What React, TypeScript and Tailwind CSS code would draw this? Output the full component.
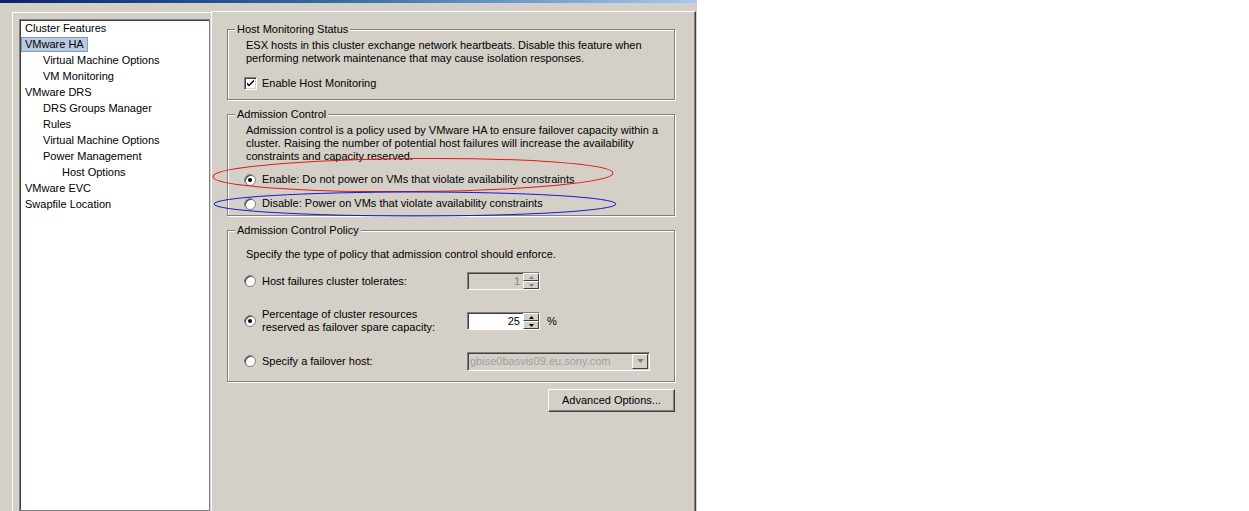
import React from "react";

const tree = [
  { label: "Cluster Features", level: 0 },
  { label: "VMware HA", level: 0, selected: true },
  { label: "Virtual Machine Options", level: 1 },
  { label: "VM Monitoring", level: 1 },
  { label: "VMware DRS", level: 0 },
  { label: "DRS Groups Manager", level: 1 },
  { label: "Rules", level: 1 },
  { label: "Virtual Machine Options", level: 1 },
  { label: "Power Management", level: 1 },
  { label: "Host Options", level: 2 },
  { label: "VMware EVC", level: 0 },
  { label: "Swapfile Location", level: 0 },
];

const indent = ["pl-0", "pl-[18px]", "pl-[37px]"];

function Radio({ checked }: { checked?: boolean }) {
  return (
    <div className="w-[12px] h-[12px] shrink-0 rounded-full bg-white border border-[#808080] shadow-[inset_1px_1px_0_#404040] flex items-center justify-center">
      {checked && <div className="w-[4px] h-[4px] rounded-full bg-black" />}
    </div>
  );
}

function Checkbox() {
  return (
    <div className="w-[13px] h-[13px] shrink-0 bg-white border border-t-[#808080] border-l-[#808080] border-b-white border-r-white shadow-[inset_1px_1px_0_#404040,inset_-1px_-1px_0_#d4d0c8] flex items-center justify-center">
      <svg width="7" height="7" viewBox="0 0 7 7">
        <path d="M0 2.5 L0 4.5 L2 6.5 L7 1.5 L7 -0.5 L2 4.5 Z" fill="#000" />
      </svg>
    </div>
  );
}

function SpinButtons({ disabled }: { disabled?: boolean }) {
  const arrow = disabled ? "#808080" : "#000";
  return (
    <div className="w-[16px] flex flex-col">
      <div className="flex-1 bg-[#d4d0c8] border border-t-white border-l-white border-b-[#404040] border-r-[#404040] flex items-center justify-center">
        <svg width="5" height="3" viewBox="0 0 5 3">
          <path d="M2.5 0 L5 3 L0 3 Z" fill={arrow} />
        </svg>
      </div>
      <div className="flex-1 bg-[#d4d0c8] border border-t-white border-l-white border-b-[#404040] border-r-[#404040] flex items-center justify-center">
        <svg width="5" height="3" viewBox="0 0 5 3">
          <path d="M0 0 L5 0 L2.5 3 Z" fill={arrow} />
        </svg>
      </div>
    </div>
  );
}

function Spinner({ value, disabled }: { value: string; disabled?: boolean }) {
  return (
    <div className="w-[73px] h-[18px] flex border border-t-[#808080] border-l-[#808080] border-b-white border-r-white">
      <div
        className={
          disabled
            ? "flex-1 bg-[#d4d0c8] text-[#808080] text-right pr-[3px] leading-[16px] shadow-[inset_1px_1px_0_#404040]"
            : "flex-1 bg-white text-black text-right pr-[3px] leading-[16px] shadow-[inset_1px_1px_0_#404040]"
        }
      >
        {value}
      </div>
      <SpinButtons disabled={disabled} />
    </div>
  );
}

function Group({ title, children, className }: { title: string; children: React.ReactNode; className?: string }) {
  return (
    <fieldset className={"border border-[#808080] shadow-[inset_1px_1px_0_#fff,1px_1px_0_#fff] px-[7px] " + (className ?? "")}>
      <legend className="px-[2px] bg-[#d4d0c8] leading-[13px]">{title}</legend>
      {children}
    </fieldset>
  );
}

export default function App() {
  return (
    <div className="w-[1249px] h-[511px] bg-white flex font-['Liberation_Sans',Arial,sans-serif] text-[11px] leading-[13px] text-black overflow-hidden">
      <div className="relative w-[697px] h-full bg-[#d4d0c8] flex flex-col">
        <div className="h-[3px] bg-gradient-to-r from-[#0a246a] via-[#3a6ea5] to-[#a6caf0]" />
        <div className="flex-1 flex pt-[8px] min-h-0">
          {/* tree */}
          <div className="ml-[12px] mt-[1px] w-[199px] border-t border-l border-white pt-[6px] pl-[6px]">
            <div className="w-[191px] h-full bg-white border border-[#808080] shadow-[inset_1px_1px_0_#404040] pl-[1px]">
              {tree.map((t, i) => (
                <div key={i} className={"h-[16px] flex items-center " + indent[t.level]}>
                  {t.selected ? (
                    <span className="px-[3px] leading-[13px] bg-[#b9cbe3] border border-[#7f9db9]">{t.label}</span>
                  ) : (
                    <span className="px-[4px]">{t.label}</span>
                  )}
                </div>
              ))}
            </div>
          </div>

          {/* settings */}
          <div className="w-[485px] h-full border-t border-l border-white border-r border-r-[#404040] shadow-[inset_-1px_0_0_#808080] pl-[15px] pt-[11px]">
            <div className="w-[448px] flex flex-col">
              <Group title="Host Monitoring Status" className="pb-[9px]">
                <div className="pl-[11px] pt-[3px]">
                  <p>ESX hosts in this cluster exchange network heartbeats. Disable this feature when</p>
                  <p>performing network maintenance that may cause isolation responses.</p>
                </div>
                <div className="flex items-center gap-[5px] pl-[9px] mt-[12px]">
                  <Checkbox />
                  <span>Enable Host Monitoring</span>
                </div>
              </Group>

              <Group title="Admission Control" className="mt-[8px] pb-[5px]">
                <div className="pl-[11px] pt-[3px]">
                  <p>Admission control is a policy used by VMware HA to ensure failover capacity within a</p>
                  <p>cluster. Raising the number of potential host failures will increase the availability</p>
                  <p>constraints and capacity reserved.</p>
                </div>
                <div className="flex items-center gap-[6px] pl-[9px] mt-[10px] h-[13px]">
                  <Radio checked />
                  <span>Enable: Do not power on VMs that violate availability constraints</span>
                </div>
                <div className="flex items-center gap-[6px] pl-[9px] mt-[11px] h-[13px]">
                  <Radio />
                  <span>Disable: Power on VMs that violate availability constraints</span>
                </div>
              </Group>

              <Group title="Admission Control Policy" className="mt-[8px] pb-[11px]">
                <p className="pl-[11px] pt-[11px]">Specify the type of policy that admission control should enforce.</p>
                <div className="flex items-center pl-[9px] mt-[11px] h-[18px]">
                  <Radio />
                  <span className="w-[211px] pl-[6px]">Host failures cluster tolerates:</span>
                  <Spinner value="1" disabled />
                </div>
                <div className="flex items-center pl-[9px] mt-[22px] h-[18px]">
                  <Radio checked />
                  <span className="w-[211px] pl-[6px]">
                    Percentage of cluster resources
                    <br />
                    reserved as failover spare capacity:
                  </span>
                  <Spinner value="25" />
                  <span className="ml-[7px]">%</span>
                </div>
                <div className="flex items-center pl-[9px] mt-[22px] h-[18px]">
                  <Radio />
                  <span className="w-[211px] pl-[6px]">Specify a failover host:</span>
                  <div className="w-[183px] h-[19px] flex border border-t-[#808080] border-l-[#808080] border-b-white border-r-white shadow-[inset_1px_1px_0_#404040]">
                    <div className="flex-1 pl-[2px] leading-[17px] text-[#a0a0a0]">gbise0basvis09.eu.sony.com</div>
                    <div className="w-[16px] my-[1px] mr-[1px] border border-t-white border-l-white border-b-[#404040] border-r-[#404040] flex items-center justify-center">
                      <svg width="7" height="4" viewBox="0 0 7 4">
                        <path d="M0 0 L7 0 L3.5 4 Z" fill="#808080" />
                      </svg>
                    </div>
                  </div>
                </div>
              </Group>

              <div className="flex justify-end mt-[7px]">
                <button className="w-[127px] h-[23px] bg-[#d4d0c8] border border-t-white border-l-white border-b-[#404040] border-r-[#404040] shadow-[inset_-1px_-1px_0_#808080]">
                  Advanced Options...
                </button>
              </div>
            </div>
          </div>
        </div>

        {/* annotations drawn over the dialog */}
        <svg className="absolute left-0 top-0 pointer-events-none" width="697" height="511">
          <ellipse cx="413" cy="175" rx="200" ry="16.5" fill="none" stroke="#e01818" strokeWidth="1" transform="rotate(-0.5 413 175)" />
          <ellipse cx="415" cy="204" rx="201" ry="12" fill="none" stroke="#1818d0" strokeWidth="1" />
        </svg>
      </div>
    </div>
  );
}
